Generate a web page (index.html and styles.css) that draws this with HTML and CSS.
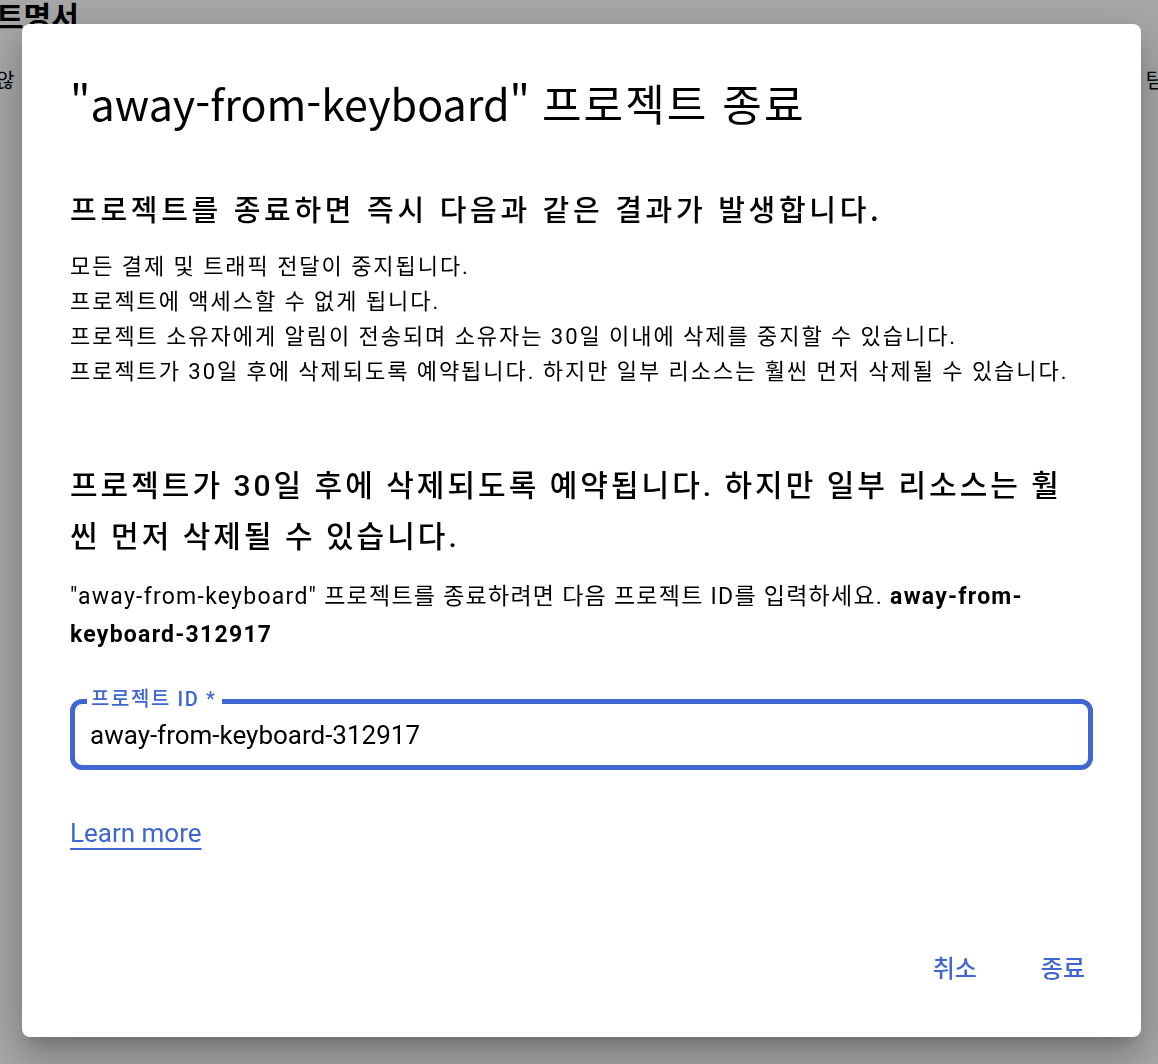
FILE: index.html
```html
<!DOCTYPE html>
<html lang="ko">
<head>
<meta charset="utf-8">
<title>프로젝트 종료</title>
<link rel="stylesheet" href="styles.css">
</head>
<body>
<div class="page">
  <div class="page-title">트명서</div>
  <div class="page-row">
    <span class="page-left">않</span>
    <span class="page-right">팀</span>
  </div>
</div>
<div class="scrim"></div>
<div class="dialog" role="dialog">
  <h1 class="dialog-title">"away-from-keyboard" <span class="ko">프로젝트 종료</span></h1>
  <h2 class="section-title">프로젝트를 종료하면 즉시 다음과 같은 결과가 발생합니다.</h2>
  <ul class="effects">
    <li>모든 결제 및 트래픽 전달이 중지됩니다.</li>
    <li>프로젝트에 액세스할 수 없게 됩니다.</li>
    <li>프로젝트 소유자에게 알림이 전송되며 소유자는 30일 이내에 삭제를 중지할 수 있습니다.</li>
    <li>프로젝트가 30일 후에 삭제되도록 예약됩니다. 하지만 일부 리소스는 훨씬 먼저 삭제될 수 있습니다.</li>
  </ul>
  <h2 class="warn-title">프로젝트가 30일 후에 삭제되도록 예약됩니다. 하지만 일부 리소스는 훨씬 먼저 삭제될 수 있습니다.</h2>
  <p class="confirm-text">"away-from-keyboard" 프로젝트를 종료하려면 다음 프로젝트 ID를 입력하세요. <b>away-from-keyboard-312917</b></p>
  <div class="field">
    <span class="field-label">프로젝트 ID *</span>
    <span class="field-value">away-from-keyboard-312917</span>
  </div>
  <a class="learn-more" href="#">Learn more</a>
  <div class="actions">
    <button class="btn">취소</button>
    <button class="btn">종료</button>
  </div>
</div>
</body>
</html>
```

FILE: styles.css
```css
html, body {
  margin: 0;
  padding: 0;
  height: 100%;
  overflow: hidden;
}
body {
  background: #ffffff;
  font-family: Roboto, "Noto Sans CJK KR", sans-serif;
  color: #202124;
}
.page-title {
  font-family: "Noto Sans CJK KR", sans-serif;
  font-weight: 700;
  font-size: 30px;
  line-height: 30px;
  margin-left: -4px;
  color: #000;
}
.page-row {
  display: flex;
  justify-content: space-between;
  margin-top: 38px;
  font-family: "Noto Sans CJK KR", sans-serif;
  font-size: 20px;
  line-height: 24px;
  color: #000;
}
.page-left { margin-left: -4px; }
.page-right { margin-right: -6px; }
.scrim {
  position: fixed;
  inset: 0;
  background: rgba(0, 0, 0, 0.34);
}
.dialog {
  position: absolute;
  left: 22px;
  top: 24px;
  width: 1119px;
  height: 1013px;
  box-sizing: border-box;
  background: #fff;
  border-radius: 8px;
  padding: 54px 48px 0 48px;
  display: flex;
  flex-direction: column;
  box-shadow: 0 11px 15px -7px rgba(0,0,0,.2), 0 24px 38px 3px rgba(0,0,0,.14), 0 9px 46px 8px rgba(0,0,0,.12);
  color: #000;
}
.dialog-title {
  margin: 0;
  font-family: "Noto Sans CJK KR", sans-serif;
  font-weight: 400;
  font-size: 43px;
  line-height: 48px;
}
.dialog-title .ko {
  letter-spacing: 2px;
}
.section-title {
  margin: 64px 0 0 0;
  font-family: "Noto Sans CJK KR", sans-serif;
  font-weight: 500;
  font-size: 29px;
  line-height: 36px;
  letter-spacing: 3.7px;
}
.effects {
  list-style: none;
  margin: 23px 0 0 0;
  padding: 0;
  font-family: Roboto, "Noto Sans CJK KR", sans-serif;
  font-size: 22px;
  line-height: 35px;
  letter-spacing: 1.95px;
}
.warn-title {
  margin: 71px 20px 0 0;
  font-family: Roboto, "Noto Sans CJK KR", sans-serif;
  font-weight: 500;
  font-size: 30px;
  line-height: 51px;
  letter-spacing: 3px;
}
.confirm-text {
  margin: 16px 0 0 0;
  font-family: Roboto, "Noto Sans CJK KR", sans-serif;
  font-size: 23px;
  line-height: 38px;
  letter-spacing: 1.25px;
}
.confirm-text b { font-weight: 700; }
.field {
  position: relative;
  margin-top: 45px;
  height: 71px;
  box-sizing: border-box;
  border: 5px solid #3f66d1;
  border-radius: 12px;
  display: flex;
  align-items: center;
  padding: 0 15px;
}
.field-label {
  position: absolute;
  left: 12px;
  top: -17px;
  background: #fff;
  padding: 0 5px 0 4px;
  font-family: Roboto, "Noto Sans CJK KR", sans-serif;
  font-weight: 500;
  font-size: 20px;
  line-height: 24px;
  letter-spacing: 1.6px;
  color: #3f66d1;
}
.field-value {
  font-family: Roboto, sans-serif;
  font-size: 26px;
  color: #000;
}
.learn-more {
  align-self: flex-start;
  margin-top: 48px;
  font-family: Roboto, sans-serif;
  font-size: 26px;
  line-height: 30px;
  color: #3f66d1;
  text-decoration: underline;
  text-underline-offset: 6px;
  text-decoration-thickness: 2px;
}
.actions {
  margin-top: auto;
  margin-bottom: 47px;
  display: flex;
  justify-content: flex-end;
  gap: 48px;
}
.btn {
  border: 0;
  background: none;
  padding: 8px 8px;
  font-family: "Noto Sans CJK KR", sans-serif;
  font-weight: 500;
  font-size: 24px;
  line-height: 30px;
  color: #3f66d1;
}
```
